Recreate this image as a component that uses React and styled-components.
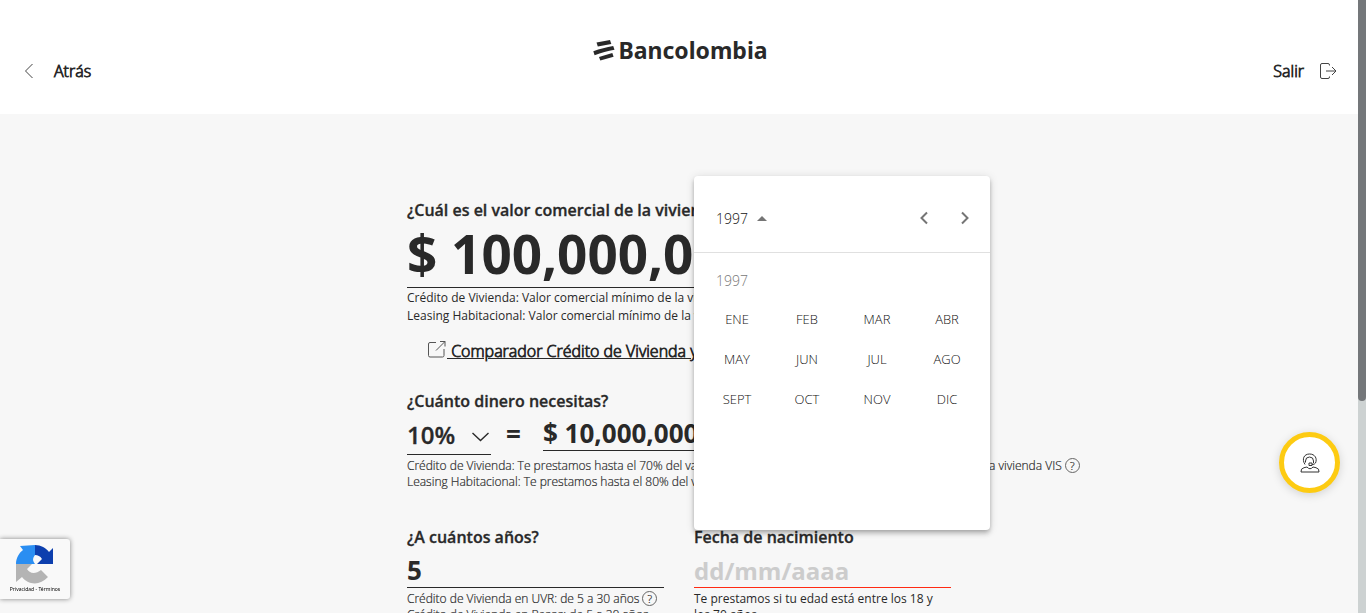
import React from 'react';
import styled, { createGlobalStyle } from 'styled-components';

const ink = '#292929';
const sans = '"Open Sans", "Noto Sans", sans-serif';

const GlobalStyle = createGlobalStyle`
  *, *::before, *::after { box-sizing: border-box; }
  body { margin: 0; background: #f7f7f7; color: ${ink}; font-family: ${sans}; }
  button, input, select { font: inherit; color: inherit; margin: 0; padding: 0; border: 0; background: none; border-radius: 0; }
  button { cursor: pointer; }
`;

const Page = styled.div`
  height: 100vh;
  overflow: hidden;
  display: flex;
  flex-direction: column;
`;

const Header = styled.header`
  flex: none;
  display: grid;
  grid-template-columns: 1fr auto 1fr;
  padding: 36px 29px 29px 24px;
  min-height: 114px;
  background: #fff;
`;

const NavButton = styled.button`
  display: flex;
  align-items: center;
  align-self: end;
  justify-self: ${(p) => p.$side};
  gap: ${(p) => p.$gap};
  height: 28px;
  font-size: 16px;
  font-weight: 300;
  span { -webkit-text-stroke: 0.8px ${ink}; }
`;

const Logo = styled.div`
  display: flex;
  align-items: center;
  align-self: start;
  gap: 3px;
  height: 28px;
  font: 700 23px/28px "Noto Sans", sans-serif;
`;

const Main = styled.main`
  flex: 1;
  min-height: 0;
  padding: 84px 8px 0 0;
`;

const Form = styled.form`
  max-width: 544px;
  margin: 0 auto;
`;

const Label = styled.label`
  display: block;
  font-size: 16px;
  line-height: 24px;
  font-weight: 600;
  -webkit-text-stroke: 0.3px ${ink};
  white-space: nowrap;
`;

const ValueInput = styled.input`
  display: block;
  width: 100%;
  height: ${(p) => (p.$large ? '66px' : '39px')};
  padding: ${(p) => (p.$large ? '0 0 2px' : '3px 0 0')};
  font-size: ${(p) => (p.$large ? '53px' : '26px')};
  font-weight: 700;
  border-bottom: 1px solid ${(p) => (p.$invalid ? '#ff2a13' : ink)};
  outline: none;
  &::placeholder { color: #ccc; opacity: 1; font-size: 24px; }
`;

const Hint = styled.p`
  margin: 0;
  padding-top: ${(p) => (p.$loose ? '1px' : '3px')};
  padding-right: 8px;
  font-size: 12px;
  font-weight: ${(p) => (p.$light ? 300 : 400)};
  -webkit-text-stroke: ${(p) => (p.$light ? '0.2px' : '0')} ${ink};
  line-height: ${(p) => (p.$loose ? '18px' : '16px')};
  white-space: ${(p) => (p.$wrap ? 'normal' : 'nowrap')};
`;

const CompareLink = styled.a`
  display: flex;
  align-items: center;
  gap: 1px;
  height: 24px;
  margin: 14px 0 26px 21px;
  font-size: 16px;
  font-weight: 300;
  color: ${ink};
  white-space: nowrap;
  text-decoration: none;
  span { text-decoration: underline; white-space: pre; -webkit-text-stroke: 0.8px ${ink}; }
  svg { margin-bottom: 4px; }
`;

const LoanRow = styled.div`
  display: flex;
  align-items: flex-start;
  height: 42px;
`;

const PercentBox = styled.div`
  position: relative;
  width: 84px;
  border-bottom: 1px solid ${ink};
  svg { position: absolute; right: 1px; bottom: 12px; pointer-events: none; }
`;

const PercentSelect = styled.select`
  appearance: none;
  display: block;
  width: 100%;
  height: 41px;
  padding-top: 2px;
  font-size: 24px;
  font-weight: 600;
  -webkit-text-stroke: 0.3px ${ink};
`;

const EqualSign = styled.span`
  width: 52px;
  padding-left: 15px;
  font-size: 26px;
  font-weight: 700;
  line-height: 42px;
`;

const AmountBox = styled.div`
  flex: 1;
  input { height: 38px; }
`;

const Fields = styled.div`
  display: grid;
  grid-template-columns: 1fr 1fr;
  gap: 30px;
  margin-top: 35px;
`;

const Field = styled.div`
  position: relative;
  min-width: 0;
`;

const HelpButton = styled.button`
  width: 15px;
  height: 15px;
  margin: -2px 0 0 3px;
  border: 1px solid #666;
  border-radius: 50%;
  font-size: 11px;
  line-height: 13px;
  vertical-align: middle;
`;

const Calendar = styled.section`
  position: absolute;
  left: 0;
  bottom: calc(100% - 5px);
  z-index: 2;
  width: 296px;
  height: 354px;
  background: #fff;
  border-radius: 4px;
  color: #111;
  font-weight: 300;
  box-shadow: 0 2px 4px -1px rgba(0, 0, 0, 0.2), 0 4px 5px rgba(0, 0, 0, 0.14), 0 1px 10px rgba(0, 0, 0, 0.12);
`;

const CalendarHeader = styled.div`
  display: flex;
  align-items: center;
  height: 77px;
  padding: 8px 6px 0 22px;
  border-bottom: 1px solid #e0e0e0;
`;

const YearButton = styled.button`
  display: flex;
  align-items: center;
  gap: 9px;
  margin-right: auto;
  font-size: 14px;
`;

const UpArrow = styled.span`
  border: 5px solid transparent;
  border-top: 0;
  border-bottom-color: #757575;
`;

const ArrowButton = styled.button`
  display: grid;
  place-items: center;
  width: 40px;
  height: 40px;
`;

const YearTitle = styled.div`
  padding: 18px 22px 8px;
  font-size: 14px;
  line-height: 20px;
  color: #777;
`;

const Months = styled.div`
  display: grid;
  grid-template-columns: repeat(4, 1fr);
  grid-auto-rows: 40px;
  padding: 0 8px;
`;

const Month = styled.button`
  font-size: 13px;
`;

const Captcha = styled.aside`
  position: fixed;
  left: 0;
  bottom: 14px;
  z-index: 3;
  display: flex;
  flex-direction: column;
  align-items: center;
  width: 70px;
  height: 60px;
  padding-top: 5px;
  background: #f9f9f9;
  border-radius: 0 3px 3px 0;
  box-shadow: 0 0 5px gray;
  font: 5px/10px "Noto Sans", sans-serif;
  white-space: nowrap;
  a { color: #000; text-decoration: none; }
`;

const ChatButton = styled.button`
  position: fixed;
  right: 26px;
  bottom: 120px;
  z-index: 3;
  display: grid;
  place-items: center;
  width: 61px;
  height: 61px;
  background: #fff;
  border: 5px solid #fdcb12;
  border-radius: 50%;
  box-shadow: 0 2px 10px rgba(0, 0, 0, 0.15);
`;

const ScrollTrack = styled.div`
  position: fixed;
  top: 0;
  right: 0;
  bottom: 0;
  z-index: 4;
  width: 8px;
  background: #cdd2d2;
`;

const ScrollThumb = styled.div`
  height: 401px;
  background: #74777a;
  border-radius: 0 0 4px 4px;
`;

const Help = () => <HelpButton type="button" aria-label="Ayuda">?</HelpButton>;

const LogoMark = () => (
  <svg width="22" height="22" viewBox="0 0 22 22" fill={ink} aria-hidden="true">
    <path d="M3.500 3.600 17 1.100 18.300 4.900 4.800 7.600z" />
    <path d="M.3 12.300C7 9.700 13.500 8 20.200 6.900L21.500 10.700C14.600 11.800 8.300 13.500 1.600 16.200z" />
    <path d="M6 18 19.300 14 20.600 17.800 7.300 21.600z" />
  </svg>
);

const months = ['ENE', 'FEB', 'MAR', 'ABR', 'MAY', 'JUN', 'JUL', 'AGO', 'SEPT', 'OCT', 'NOV', 'DIC'];

function MonthPicker() {
  return (
    <Calendar aria-label="Calendario">
      <CalendarHeader>
        <YearButton type="button">1997 <UpArrow /></YearButton>
        <ArrowButton type="button" aria-label="Año anterior">
          <svg width="12" height="14" viewBox="0 0 12 14" fill="none" stroke="#757575" strokeWidth="2"><path d="M9 1.500 3.500 7l5.500 5.500" /></svg>
        </ArrowButton>
        <ArrowButton type="button" aria-label="Año siguiente">
          <svg width="12" height="14" viewBox="0 0 12 14" fill="none" stroke="#757575" strokeWidth="2"><path d="m4 1.500 5.500 5.500-5.500 5.500" /></svg>
        </ArrowButton>
      </CalendarHeader>
      <YearTitle>1997</YearTitle>
      <Months>
        {months.map((m) => <Month type="button" key={m}>{m}</Month>)}
      </Months>
    </Calendar>
  );
}

export default function App() {
  return (
    <Page>
      <GlobalStyle />
      <Header>
        <NavButton type="button" $side="start" $gap="20px">
          <svg width="10" height="16" viewBox="0 0 10 16" fill="none" stroke="#444" strokeWidth="1"><path d="M8.500 1 1.500 8l7 7" /></svg>
          <span>Atrás</span>
        </NavButton>
        <Logo><LogoMark />Bancolombia</Logo>
        <NavButton type="button" $side="end" $gap="16px">
          <span>Salir</span>
          <svg width="17" height="16" viewBox="0 0 17 16" fill="none" stroke="#444" strokeWidth="1">
            <path d="M9.500 2.500V2q0-1.500-1.500-1.500H2Q.5.500.5 2v12q0 1.500 1.500 1.500h6q1.500 0 1.500-1.500v-.5M6 8h10M12 4 16 8 12 12" />
          </svg>
        </NavButton>
      </Header>
      <Main>
        <Form>
          <Label htmlFor="valor">¿Cuál es el valor comercial de la vivienda?</Label>
          <ValueInput id="valor" $large defaultValue="$ 100,000,000" />
          <Hint $loose>
            Crédito de Vivienda: Valor comercial mínimo de la vivienda<br />
            Leasing Habitacional: Valor comercial mínimo de la vivienda
          </Hint>
          <CompareLink href="#comparador">
            <svg width="18" height="18" viewBox="0 0 18 18" fill="none" stroke="#555" strokeWidth="1">
              <path d="M8 2.500H2Q.5 2.500.5 4v11.500Q.5 17 2 17h12.500q1.500 0 1.500-1.500V9M8 10.500 17 1.500M12 1.500h5v5" />
            </svg>
            <span> Comparador Crédito de Vivienda y Leasing</span>
          </CompareLink>
          <Label htmlFor="porcentaje">¿Cuánto dinero necesitas?</Label>
          <LoanRow>
            <PercentBox>
              <PercentSelect id="porcentaje" defaultValue="10">
                <option value="10">10%</option>
              </PercentSelect>
              <svg width="19" height="10" viewBox="0 0 19 10" fill="none" stroke={ink} strokeWidth="1.400"><path d="m1.500 1 8 7.500 8-7.500" /></svg>
            </PercentBox>
            <EqualSign>=</EqualSign>
            <AmountBox><ValueInput aria-label="Monto" defaultValue="$ 10,000,000" /></AmountBox>
          </LoanRow>
          <Hint $light>
            Crédito de Vivienda: Te prestamos hasta el 70% del valor de la vivienda No VIS y hasta el 80% del valor de una vivienda VIS<Help /><br />
            Leasing Habitacional: Te prestamos hasta el 80% del valor
          </Hint>
          <Fields>
            <Field>
              <Label htmlFor="plazo">¿A cuántos años?</Label>
              <ValueInput id="plazo" defaultValue="5" />
              <Hint $light>
                Crédito de Vivienda en UVR: de 5 a 30 años<Help /><br />
                Crédito de Vivienda en Pesos: de 5 a 20 años
              </Hint>
            </Field>
            <Field>
              <Label htmlFor="nacimiento">Fecha de nacimiento</Label>
              <ValueInput id="nacimiento" $invalid placeholder="dd/mm/aaaa" />
              <Hint $wrap>Te prestamos si tu edad está entre los 18 y los 70 años</Hint>
              <MonthPicker />
            </Field>
          </Fields>
        </Form>
      </Main>
      <Captcha>
        <svg width="40" height="40" viewBox="0 0 40 40" aria-hidden="true">
          <path fill="#0d3fae" d="M20 1c6 0 11 3 14 7l4-4v16H22l5-5c-2-3-4-4-7-4z" />
          <path fill="#2a8ef2" d="M20 1v10c-2 3-3 5 0 9H11l-1 0H1c0-6 3-11 7-14L5 2z" />
          <path fill="#b4b4b4" d="M1 20h16l-5 5c2 4 8 6 14 1l7 7c-8 9-20 8-26 0l-6 5z" />
        </svg>
        <div><a href="#privacidad">Privacidad</a> - <a href="#terminos">Términos</a></div>
      </Captcha>
      <ChatButton type="button" aria-label="Asistente">
        <svg width="20" height="20" viewBox="0 0 20 20" fill="none" stroke="#333" strokeWidth="1">
          <path d="M5 11.500C1.500 6 4 1 9.500 1S17.500 5.500 15.500 10q-.8 1.500-3.500 1.500M5.500 9.500V8Q5.500 4 9.500 4t4 4v2M9 10h3v2.500H9zM1 19q-.5-3.500 3-4.300l3-.7q3 3.500 6 0l3 .7q3.500.8 3 4.300z" />
        </svg>
      </ChatButton>
      <ScrollTrack><ScrollThumb /></ScrollTrack>
    </Page>
  );
}
